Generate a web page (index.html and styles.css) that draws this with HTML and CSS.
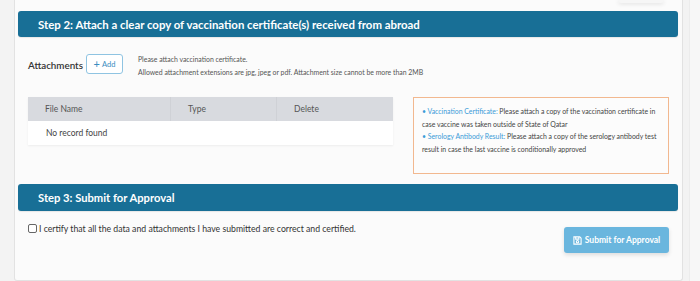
FILE: index.html
```html
<!DOCTYPE html>
<html>
<head>
<meta charset="utf-8">
<link rel="stylesheet" href="styles.css">
</head>
<body>
<div class="page">
  <div class="card">
    <div class="top-shadow-row"><span class="top-shadow"></span></div>
    <div class="step-header">Step 2: Attach a clear copy of vaccination certificate(s) received from abroad</div>
    <div class="section">
      <div class="attach-row">
        <span class="attach-label">Attachments</span>
        <button class="add-btn"><span class="plus">+</span> Add</button>
        <div class="attach-info">
          <p>Please attach vaccination certificate.</p>
          <p>Allowed attachment extensions are jpg, jpeg or pdf. Attachment size cannot be more than 2MB</p>
        </div>
      </div>
      <div class="attach-body">
        <div class="table">
          <div class="thead">
            <div class="th c1">File Name</div>
            <div class="th c2">Type</div>
            <div class="th c3">Delete</div>
          </div>
          <div class="trow">No record found</div>
        </div>
        <div class="note">
          <p><span class="link">• Vaccination Certificate:</span> Please attach a copy of the vaccination certificate in case vaccine was taken outside of State of Qatar</p>
          <p><span class="link">• Serology Antibody Result:</span> Please attach a copy of the serology antibody test result in case the last vaccine is conditionally approved</p>
        </div>
      </div>
    </div>
    <div class="step-header step3">Step 3: Submit for Approval</div>
    <div class="submit-row">
      <label class="certify"><span class="box"></span>I certify that all the data and attachments I have submitted are correct and certified.</label>
      <button class="submit-btn">
        <svg width="9" height="9" viewBox="0 0 10 10" fill="none" stroke="#fff" stroke-width="1.2">
          <path d="M1 1h6.5L9 2.5V9H1z"/>
          <path d="M3 1v2.5h3.5V1"/>
          <circle cx="5" cy="6.3" r="1.3"/>
        </svg>
        Submit for Approval
      </button>
    </div>
  </div>
  <div class="side"></div>
</div>
</body>
</html>
```

FILE: styles.css
```css
* { box-sizing: border-box; }
html, body { margin: 0; padding: 0; }
body {
  background: #f3f3f3;
  font-family: "Lato", "Open Sans", sans-serif;
  color: #333;
  width: 700px;
  height: 281px;
  overflow: hidden;
}
p { margin: 0; }
.page {
  display: flex;
  padding-left: 14px;
}
.card {
  width: 669px;
  background: #fbfbfb;
  border: 1px solid #e2e2e2;
  border-top: none;
  border-radius: 0 0 3px 3px;
  padding: 0 4px 18px 3px;
}
.side {
  margin-left: 6px;
  width: 11px;
  height: 281px;
  background: #f7f7f7;
  border-left: 1px solid #ececec;
}
.top-shadow-row {
  height: 11px;
  display: flex;
  justify-content: flex-end;
  padding-right: 14px;
}
.top-shadow {
  width: 46px;
  height: 3px;
  border-radius: 0 0 4px 4px;
  box-shadow: 0 1px 4px rgba(0,0,0,0.12);
  background: #f6f6f6;
}
.step-header {
  height: 26px;
  background: #186f96;
  border-radius: 3px;
  color: #fff;
  font-size: 11.4px;
  font-weight: 700;
  padding-left: 20px;
  display: flex;
  align-items: center;
  box-shadow: 0 1px 1px rgba(0,0,0,0.08);
}
.step3 { height: 27px; font-size: 11.2px; }
.section {
  padding: 17px 9px 10px 10px;
}
.attach-row {
  display: flex;
  align-items: flex-start;
}
.attach-label {
  font-size: 9.8px;
  font-weight: 600;
  color: #333;
  margin-top: 5px;
  width: 58px;
}
.add-btn {
  width: 37px;
  height: 20px;
  border: 1px solid #8fc4e2;
  border-radius: 3px;
  background: #fff;
  color: #3b8dc0;
  font-family: inherit;
  font-size: 7.5px;
  padding: 0;
  display: flex;
  align-items: center;
  justify-content: center;
  gap: 2px;
}
.add-btn .plus { font-size: 11px; line-height: 1; margin-top: -1px; }
.attach-info {
  margin-left: 15px;
  font-size: 6.9px;
  color: #555;
  line-height: 13px;
  margin-top: -1px;
}
.attach-body {
  display: flex;
  align-items: flex-start;
  margin-top: 18px;
}
.table {
  width: 365px;
  background: #fff;
  box-shadow: 0 1px 2px rgba(0,0,0,0.06);
}
.thead {
  display: flex;
  height: 24px;
  background: #d8dadf;
}
.th {
  font-size: 8.5px;
  color: #555;
  display: flex;
  align-items: center;
  padding-left: 17px;
}
.c1 { width: 143px; border-right: 1px solid #cfd1d6; }
.c2 { width: 106px; border-right: 1px solid #cfd1d6; }
.c3 { flex: 1; }
.trow {
  height: 24px;
  font-size: 8.5px;
  color: #444;
  display: flex;
  align-items: center;
  padding-left: 18px;
}
.note {
  margin-left: 20px;
  width: 256px;
  height: 77px;
  border: 1px solid #f2b88f;
  background: #fcfcfc;
  padding: 7px 8px 0 8px;
  font-size: 6.9px;
  line-height: 12.6px;
  color: #444;
}
.link { color: #3b9bd8; }
.submit-row {
  display: flex;
  justify-content: space-between;
  align-items: flex-start;
  padding: 11px 9px 0 10px;
}
.certify {
  display: flex;
  align-items: center;
  font-size: 8.7px;
  color: #333;
  height: 12px;
}
.box {
  width: 9px;
  height: 9px;
  border: 1px solid #666;
  border-radius: 2px;
  background: #fff;
  margin-right: 2px;
}
.submit-btn {
  margin-top: 5px;
  width: 105px;
  height: 26px;
  border: none;
  border-radius: 3px;
  background: #6ab6de;
  color: #fff;
  font-family: inherit;
  font-weight: 700;
  font-size: 8.5px;
  display: flex;
  align-items: center;
  justify-content: center;
  gap: 3px;
  box-shadow: 0 2px 4px rgba(0,0,0,0.12);
  padding: 0;
}
```
